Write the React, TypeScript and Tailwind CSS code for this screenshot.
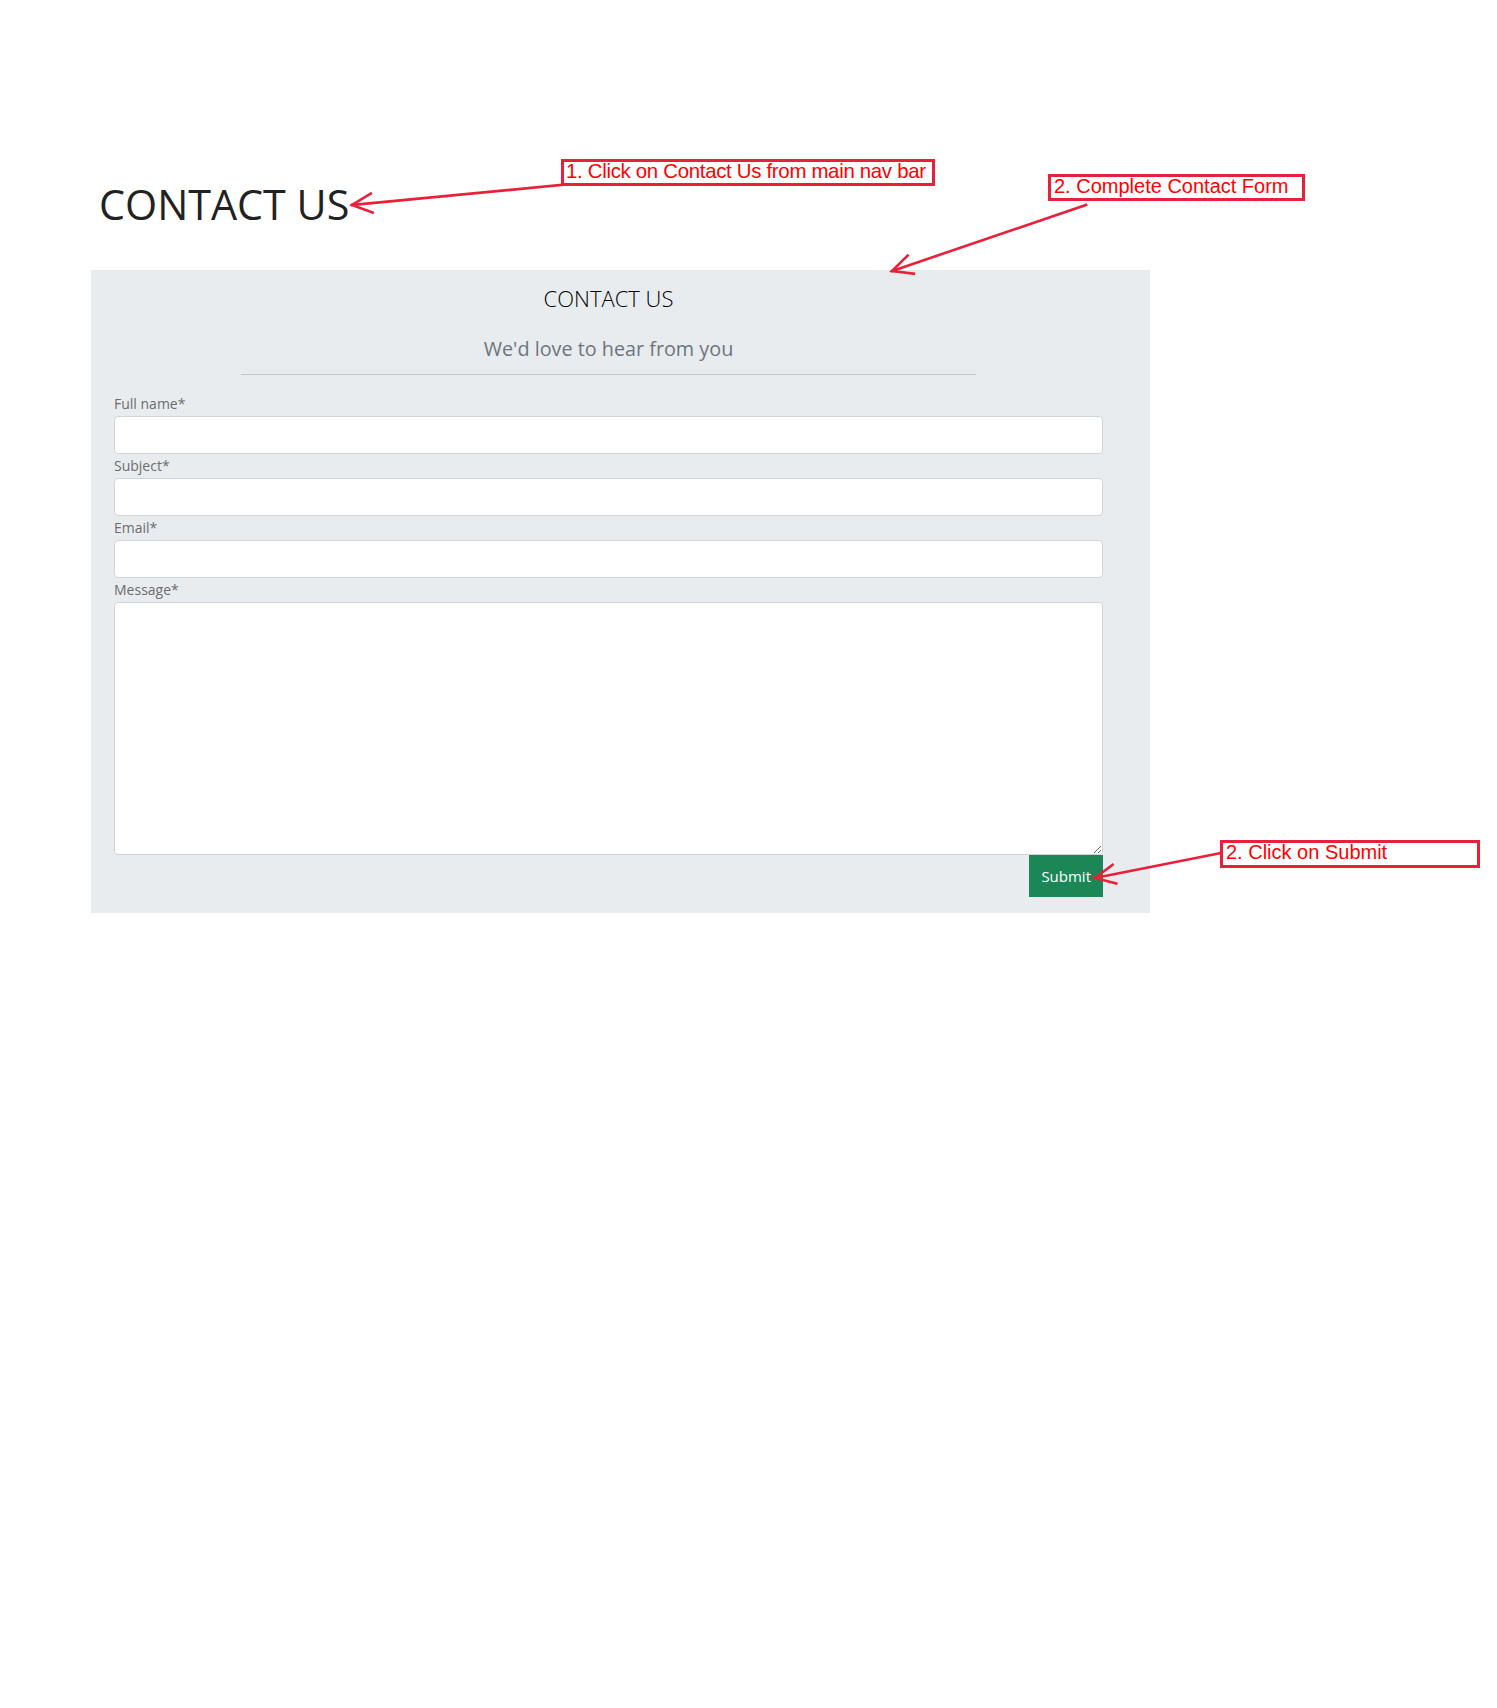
import React from "react";

const fields = ["Full name*", "Subject*", "Email*"];

function Arrow({ x1, y1, x2, y2 }: { x1: number; y1: number; x2: number; y2: number }) {
  // line from (x1,y1) to tip (x2,y2), open V head at the tip
  const a = Math.atan2(y1 - y2, x1 - x2);
  const len = 22;
  const spread = 0.45;
  const p1 = [x2 + len * Math.cos(a + spread), y2 + len * Math.sin(a + spread)];
  const p2 = [x2 + len * Math.cos(a - spread), y2 + len * Math.sin(a - spread)];
  return (
    <g stroke="#e8203a" strokeWidth={2.6} fill="none" strokeLinecap="square">
      <line x1={x1} y1={y1} x2={x2} y2={y2} />
      <polyline points={`${p1[0]},${p1[1]} ${x2},${y2} ${p2[0]},${p2[1]}`} />
    </g>
  );
}

function Note({ text, className }: { text: string; className: string }) {
  return (
    <div
      className={`absolute whitespace-nowrap border-[3px] border-[#e8203a] bg-white leading-[19px] text-[#ff0000] ${className}`}
      style={{ fontFamily: '"Liberation Sans", Arial, sans-serif' }}
    >
      {text}
    </div>
  );
}

export default function App() {
  return (
    <div
      className="relative min-h-[1708px] w-full bg-white"
      style={{ fontFamily: '"Open Sans", "Noto Sans", sans-serif' }}
    >
      {/* HEADING */}
      <h1 className="ml-[99px] pt-[180px] text-[41.3px] font-normal leading-[49px] text-[#222]">
        CONTACT US
      </h1>

      {/* FORM PANEL */}
      <div className="ml-[91px] mt-[41px] w-[1059px] bg-[#e9ecef] pb-4 pl-[23px] pr-[47px] pt-[13px]">
        <h2 className="text-center text-[22px] font-light leading-[30px] text-black">CONTACT US</h2>
        <p className="mt-[21px] text-center text-[19.8px] leading-[30px] text-[#6c757d]">
          We'd love to hear from you
        </p>
        <hr className="mx-auto mt-[10px] w-[735px] border-t border-[#c4c6c8]" />

        <form className="mt-[17px] flex flex-col" onSubmit={(e) => e.preventDefault()}>
          {fields.map((f) => (
            <div key={f} className="flex flex-col">
              <label className="text-[14px] leading-[24px] text-[#6c6c6c]">{f}</label>
              <input
                type="text"
                className="h-[38px] w-full rounded border border-[#ced4da] bg-white px-3 outline-none"
              />
            </div>
          ))}
          <div className="flex flex-col">
            <label className="text-[14px] leading-[24px] text-[#6c6c6c]">Message*</label>
            <textarea className="h-[253px] w-full rounded border border-[#ced4da] bg-white px-3 outline-none" />
          </div>
          <div className="flex justify-end">
            <button
              type="submit"
              className="h-[42px] bg-[#1b8756] px-3 text-[15px] text-white"
            >
              Submit
            </button>
          </div>
        </form>
      </div>

      {/* ANNOTATIONS */}
      <Note text="1. Click on Contact Us from main nav bar" className="left-[561px] top-[159px] h-[27px] w-[374px] pl-[2px] text-[20.4px] tracking-[-0.3px]" />
      <Note text="2. Complete Contact Form" className="left-[1048px] top-[174px] h-[27px] w-[257px] pl-[3px] text-[20px]" />
      <Note text="2. Click on Submit" className="left-[1220px] top-[840px] h-[28px] w-[260px] pl-[3px] text-[20px]" />

      <svg className="pointer-events-none absolute left-0 top-0" width={1497} height={1708}>
        <Arrow x1={561} y1={185} x2={352} y2={205} />
        <Arrow x1={1086} y1={205} x2={892} y2={271} />
        <Arrow x1={1221} y1={853} x2={1095} y2={878} />
      </svg>
    </div>
  );
}
